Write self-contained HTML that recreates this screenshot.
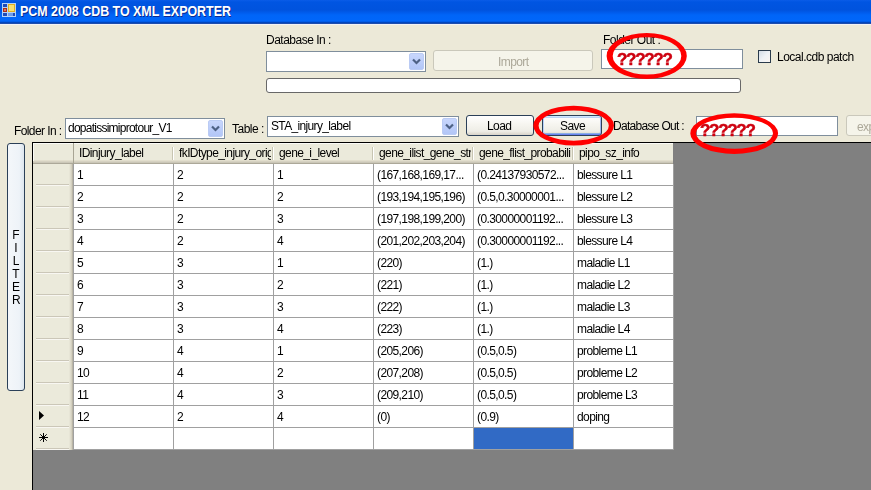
<!DOCTYPE html>
<html><head><meta charset="utf-8"><style>
*{box-sizing:border-box;margin:0;padding:0}
html,body{width:871px;height:490px;overflow:hidden;background:#ECE9D8;font-family:"Liberation Sans",sans-serif;font-size:12px;color:#000}
.a{position:absolute}
.t{position:absolute;white-space:nowrap;line-height:14px;letter-spacing:-0.6px;will-change:transform}
#title{left:0;top:0;width:871px;height:25px;background:linear-gradient(#0A5CE8 0px,#0055E2 2px,#0053DE 10px,#005DEE 13px,#0065F8 15px,#0066FA 21px,#0052D8 22px,#0038A4 23px,#3A62B8 24px,#F2F2F6 24px)}
.combo{position:absolute;background:#fff;border:1px solid #7F8E9C}
.ddb{position:absolute;right:1px;top:1px;width:15px;bottom:1px;background:linear-gradient(#C8D6FC,#B2C6F7);border:1px solid #BACBF4;border-radius:2px}
.ddb svg{position:absolute;left:2px;top:4px}
.btn{position:absolute;border:1px solid #2B4058;border-radius:3px;background:linear-gradient(#FFFFFF 0%,#F7F6F1 40%,#EEEDE6 80%,#D8D3C8 100%)}
.btnd{position:absolute;border:1px solid #CAC8BB;border-radius:3px;background:#F5F4EA}
.tb{position:absolute;background:#fff;border:1px solid #7F8E9C}
.hd{background:linear-gradient(#EBEADB 0px,#EBEADB 17px,#E2DECD 17px,#E2DECD 18px,#D6D2C2 18px,#D6D2C2 19px,#CBC7B8 19px,#CBC7B8 20px,#ACA899 20px)}
.hsep{position:absolute;width:2px;height:13px;border-left:1px solid #C7C5B2;border-right:1px solid #fff}
.rh{background:#EBEADB}
.rsep{position:absolute;width:33px;height:2px;border-top:1px solid #CBC7B8;border-bottom:1px solid #F8F7F2}
.gl{background:#A0A0A0}
</style></head><body>
<div id="title" class="a"></div>
<svg class="a" style="left:0;top:0" width="20" height="20" viewBox="0 0 20 20">
<rect x="2.5" y="3.5" width="13" height="13" fill="#2A62D8" stroke="#B4D2F6" stroke-width="1"/>
<path d="M7.5 3.5 V16.5 M2.5 7.5 H7.5 M2.5 12.5 H15.5" stroke="#B4D2F6" stroke-width="1"/>
<rect x="3" y="4" width="4" height="3" fill="#1D4AB8"/>
<rect x="3" y="8" width="4" height="4" fill="#A83018"/>
<rect x="4" y="9" width="2" height="2" fill="#E07060"/>
<rect x="3" y="13" width="4" height="3" fill="#1D4AB8"/>
<rect x="8" y="4" width="7" height="8" fill="#E0B020"/>
<rect x="9" y="5" width="5" height="6" fill="#F8E070"/>
<rect x="8" y="13" width="5" height="3" fill="#6C9CEC"/>
<rect x="13" y="13" width="2" height="3" fill="#1D4AB8"/>
</svg>
<div class="a" id="ttxt" style="left:20px;top:3px;font-weight:bold;font-size:14px;line-height:16px;color:#fff;text-shadow:1px 1px 0 #0A2A90;white-space:nowrap;transform:scaleX(0.888);transform-origin:0 0">PCM 2008 CDB TO XML EXPORTER</div>
<div class="t" style="left:266px;top:33px;letter-spacing:-0.5px">Database In :</div>
<div class="combo" style="left:266px;top:51px;width:160px;height:21px"><div class="ddb"><svg width="9" height="7" viewBox="0 0 9 7"><path d="M1 1.5 L4.5 5 L8 1.5" fill="none" stroke="#4D6185" stroke-width="2.2"/></svg></div></div>
<div class="btnd" style="left:433px;top:50px;width:160px;height:21px"></div>
<div class="t" style="left:498px;top:55px;color:#ACA899">Import</div>
<div class="a" style="left:266px;top:78px;width:475px;height:15px;border:1px solid #686868;border-radius:3px;background:#fff"></div>
<div class="t" style="left:603px;top:33px;letter-spacing:-0.5px">Folder Out :</div>
<div class="tb" style="left:601px;top:49px;width:142px;height:20px"></div>
<div class="a" style="left:758px;top:50px;width:13px;height:13px;border:1px solid #2A3B4C;background:linear-gradient(135deg,#D3DCE6,#EEF2F6 50%,#FBF6F2)"></div>
<div class="t" style="left:777px;top:50px;letter-spacing:-0.5px">Local.cdb patch</div>
<div class="t" style="left:14px;top:124px">Folder In :</div>
<div class="combo" style="left:65px;top:118px;width:160px;height:21px"><div class="ddb"><svg width="9" height="7" viewBox="0 0 9 7"><path d="M1 1.5 L4.5 5 L8 1.5" fill="none" stroke="#4D6185" stroke-width="2.2"/></svg></div></div>
<div class="t" style="left:68px;top:121px;letter-spacing:-0.75px">dopatissimiprotour_V1</div>
<div class="t" style="left:232px;top:122px;letter-spacing:-0.5px">Table :</div>
<div class="combo" style="left:267px;top:116px;width:192px;height:21px"><div class="ddb"><svg width="9" height="7" viewBox="0 0 9 7"><path d="M1 1.5 L4.5 5 L8 1.5" fill="none" stroke="#4D6185" stroke-width="2.2"/></svg></div></div>
<div class="t" style="left:271px;top:119px;letter-spacing:-0.65px">STA_injury_label</div>
<div class="btn" style="left:466px;top:115px;width:68px;height:21px"></div>
<div class="t" style="left:487px;top:119px">Load</div>
<div class="btn" style="left:542px;top:115px;width:60px;height:21px;box-shadow:inset 0 1px 0 #CEE7FF,inset 0 -1px 0 #6982EE,inset 1px 0 0 #B8D2F8,inset -1px 0 0 #A0B8F0,inset 0 2px 0 #BCD4F6,inset 0 -2px 0 #89ADE4"></div>
<div class="t" style="left:560px;top:119px">Save</div>
<div class="t" style="left:613px;top:119px;letter-spacing:-0.7px">Database Out :</div>
<div class="tb" style="left:696px;top:116px;width:142px;height:20px"></div>
<div class="btnd" style="left:846px;top:115px;width:60px;height:21px"></div>
<div class="t" style="left:857px;top:120px;color:#ACA899">export</div>
<div class="btn" style="left:7px;top:143px;width:18px;height:248px;background:linear-gradient(90deg,#F4F7FA,#EEF3F8 70%,#DDE6EE)"></div>
<div class="t" style="left:12px;top:228px;width:8px;text-align:center;letter-spacing:0">F</div>
<div class="t" style="left:12px;top:241px;width:8px;text-align:center;letter-spacing:0">I</div>
<div class="t" style="left:12px;top:254px;width:8px;text-align:center;letter-spacing:0">L</div>
<div class="t" style="left:12px;top:267px;width:8px;text-align:center;letter-spacing:0">T</div>
<div class="t" style="left:12px;top:280px;width:8px;text-align:center;letter-spacing:0">E</div>
<div class="t" style="left:12px;top:293px;width:8px;text-align:center;letter-spacing:0">R</div>
<div class="a" style="left:32px;top:142px;width:860px;height:360px;background:#808080;border-left:1px solid #000;border-top:1px solid #000"></div>
<div class="a hd" style="left:33px;top:143px;width:640px;height:21px"></div>
<div class="a" style="left:33px;top:143px;width:640px;height:1px;background:#FAFAF6"></div>
<div class="a" style="left:33px;top:143px;width:1px;height:18px;background:#FAFAF6"></div>
<div class="a" style="left:73px;top:143px;width:1px;height:21px;background:#A8A594"></div>
<div class="t" style="left:79px;top:146px;width:92px;overflow:hidden">IDinjury_label</div>
<div class="hsep" style="left:172px;top:147px"></div>
<div class="t" style="left:179px;top:146px;width:92px;overflow:hidden">fkIDtype_injury_orig</div>
<div class="hsep" style="left:272px;top:147px"></div>
<div class="t" style="left:279px;top:146px;width:92px;overflow:hidden">gene_i_level</div>
<div class="hsep" style="left:372px;top:147px"></div>
<div class="t" style="left:379px;top:146px;width:92px;overflow:hidden">gene_ilist_gene_str</div>
<div class="hsep" style="left:472px;top:147px"></div>
<div class="t" style="left:479px;top:146px;width:92px;overflow:hidden">gene_flist_probabili</div>
<div class="hsep" style="left:572px;top:147px"></div>
<div class="t" style="left:579px;top:146px;width:93px;overflow:hidden">pipo_sz_info</div>
<div class="a" style="left:73px;top:164px;width:600px;height:286px;background:#fff"></div>
<div class="a rh" style="left:33px;top:164px;width:40px;height:286px"></div>
<div class="a" style="left:69px;top:164px;width:4px;height:286px;background:linear-gradient(90deg,#EBEADB,#D6D2C2 60%,#ACA899)"></div>
<div class="rsep" style="left:36px;top:184px"></div>
<div class="rsep" style="left:36px;top:206px"></div>
<div class="rsep" style="left:36px;top:228px"></div>
<div class="rsep" style="left:36px;top:250px"></div>
<div class="rsep" style="left:36px;top:272px"></div>
<div class="rsep" style="left:36px;top:294px"></div>
<div class="rsep" style="left:36px;top:316px"></div>
<div class="rsep" style="left:36px;top:338px"></div>
<div class="rsep" style="left:36px;top:360px"></div>
<div class="rsep" style="left:36px;top:382px"></div>
<div class="rsep" style="left:36px;top:404px"></div>
<div class="rsep" style="left:36px;top:426px"></div>
<div class="rsep" style="left:36px;top:448px"></div>
<div class="a gl" style="left:73px;top:185px;width:600px;height:1px"></div>
<div class="a gl" style="left:73px;top:207px;width:600px;height:1px"></div>
<div class="a gl" style="left:73px;top:229px;width:600px;height:1px"></div>
<div class="a gl" style="left:73px;top:251px;width:600px;height:1px"></div>
<div class="a gl" style="left:73px;top:273px;width:600px;height:1px"></div>
<div class="a gl" style="left:73px;top:295px;width:600px;height:1px"></div>
<div class="a gl" style="left:73px;top:317px;width:600px;height:1px"></div>
<div class="a gl" style="left:73px;top:339px;width:600px;height:1px"></div>
<div class="a gl" style="left:73px;top:361px;width:600px;height:1px"></div>
<div class="a gl" style="left:73px;top:383px;width:600px;height:1px"></div>
<div class="a gl" style="left:73px;top:405px;width:600px;height:1px"></div>
<div class="a gl" style="left:73px;top:427px;width:600px;height:1px"></div>
<div class="a gl" style="left:73px;top:449px;width:600px;height:1px"></div>
<div class="a gl" style="left:73px;top:164px;width:1px;height:286px"></div>
<div class="a gl" style="left:173px;top:164px;width:1px;height:286px"></div>
<div class="a gl" style="left:273px;top:164px;width:1px;height:286px"></div>
<div class="a gl" style="left:373px;top:164px;width:1px;height:286px"></div>
<div class="a gl" style="left:473px;top:164px;width:1px;height:286px"></div>
<div class="a gl" style="left:573px;top:164px;width:1px;height:286px"></div>
<div class="a gl" style="left:673px;top:164px;width:1px;height:286px"></div>
<div class="t" style="left:77px;top:168px">1</div>
<div class="t" style="left:177px;top:168px">2</div>
<div class="t" style="left:277px;top:168px">1</div>
<div class="t" style="left:377px;top:168px">(167,168,169,17...</div>
<div class="t" style="left:477px;top:168px">(0.24137930572...</div>
<div class="t" style="left:577px;top:168px">blessure L1</div>
<div class="t" style="left:77px;top:190px">2</div>
<div class="t" style="left:177px;top:190px">2</div>
<div class="t" style="left:277px;top:190px">2</div>
<div class="t" style="left:377px;top:190px">(193,194,195,196)</div>
<div class="t" style="left:477px;top:190px">(0.5,0.30000001...</div>
<div class="t" style="left:577px;top:190px">blessure L2</div>
<div class="t" style="left:77px;top:212px">3</div>
<div class="t" style="left:177px;top:212px">2</div>
<div class="t" style="left:277px;top:212px">3</div>
<div class="t" style="left:377px;top:212px">(197,198,199,200)</div>
<div class="t" style="left:477px;top:212px">(0.30000001192...</div>
<div class="t" style="left:577px;top:212px">blessure L3</div>
<div class="t" style="left:77px;top:234px">4</div>
<div class="t" style="left:177px;top:234px">2</div>
<div class="t" style="left:277px;top:234px">4</div>
<div class="t" style="left:377px;top:234px">(201,202,203,204)</div>
<div class="t" style="left:477px;top:234px">(0.30000001192...</div>
<div class="t" style="left:577px;top:234px">blessure L4</div>
<div class="t" style="left:77px;top:256px">5</div>
<div class="t" style="left:177px;top:256px">3</div>
<div class="t" style="left:277px;top:256px">1</div>
<div class="t" style="left:377px;top:256px">(220)</div>
<div class="t" style="left:477px;top:256px">(1.)</div>
<div class="t" style="left:577px;top:256px">maladie L1</div>
<div class="t" style="left:77px;top:278px">6</div>
<div class="t" style="left:177px;top:278px">3</div>
<div class="t" style="left:277px;top:278px">2</div>
<div class="t" style="left:377px;top:278px">(221)</div>
<div class="t" style="left:477px;top:278px">(1.)</div>
<div class="t" style="left:577px;top:278px">maladie L2</div>
<div class="t" style="left:77px;top:300px">7</div>
<div class="t" style="left:177px;top:300px">3</div>
<div class="t" style="left:277px;top:300px">3</div>
<div class="t" style="left:377px;top:300px">(222)</div>
<div class="t" style="left:477px;top:300px">(1.)</div>
<div class="t" style="left:577px;top:300px">maladie L3</div>
<div class="t" style="left:77px;top:322px">8</div>
<div class="t" style="left:177px;top:322px">3</div>
<div class="t" style="left:277px;top:322px">4</div>
<div class="t" style="left:377px;top:322px">(223)</div>
<div class="t" style="left:477px;top:322px">(1.)</div>
<div class="t" style="left:577px;top:322px">maladie L4</div>
<div class="t" style="left:77px;top:344px">9</div>
<div class="t" style="left:177px;top:344px">4</div>
<div class="t" style="left:277px;top:344px">1</div>
<div class="t" style="left:377px;top:344px">(205,206)</div>
<div class="t" style="left:477px;top:344px">(0.5,0.5)</div>
<div class="t" style="left:577px;top:344px">probleme L1</div>
<div class="t" style="left:77px;top:366px">10</div>
<div class="t" style="left:177px;top:366px">4</div>
<div class="t" style="left:277px;top:366px">2</div>
<div class="t" style="left:377px;top:366px">(207,208)</div>
<div class="t" style="left:477px;top:366px">(0.5,0.5)</div>
<div class="t" style="left:577px;top:366px">probleme L2</div>
<div class="t" style="left:77px;top:388px">11</div>
<div class="t" style="left:177px;top:388px">4</div>
<div class="t" style="left:277px;top:388px">3</div>
<div class="t" style="left:377px;top:388px">(209,210)</div>
<div class="t" style="left:477px;top:388px">(0.5,0.5)</div>
<div class="t" style="left:577px;top:388px">probleme L3</div>
<div class="t" style="left:77px;top:410px">12</div>
<div class="t" style="left:177px;top:410px">2</div>
<div class="t" style="left:277px;top:410px">4</div>
<div class="t" style="left:377px;top:410px">(0)</div>
<div class="t" style="left:477px;top:410px">(0.9)</div>
<div class="t" style="left:577px;top:410px">doping</div>
<div class="a" style="left:474px;top:428px;width:99px;height:21px;background:#316AC5"></div>
<svg class="a" style="left:39px;top:411px" width="6" height="9" viewBox="0 0 6 9"><path d="M0 0 L5 4.5 L0 9 Z" fill="#000"/></svg>
<svg class="a" style="left:39px;top:433px" width="9" height="9" viewBox="0 0 9 9"><path d="M4.5 0 V9 M0 4.5 H9 M1.3 1.3 L7.7 7.7 M1.3 7.7 L7.7 1.3" stroke="#000" stroke-width="1"/></svg>
<svg class="a" style="left:0;top:0" width="871" height="490"><path fill="#F00" fill-rule="evenodd" d="M606.6 55.95 A40.1 22.95 0 1 0 686.8000000000001 55.95 A40.1 22.95 0 1 0 606.6 55.95 Z M612.7 55.9 A34.3 18.7 0 1 0 681.3 55.9 A34.3 18.7 0 1 0 612.7 55.9 Z M533.3 125.6 A40.35 19.8 0 1 0 614.0 125.6 A40.35 19.8 0 1 0 533.3 125.6 Z M538.6 125.65 A35.1 15.05 0 1 0 608.8000000000001 125.65 A35.1 15.05 0 1 0 538.6 125.65 Z M690.3000000000001 133.55 A43.9 20.35 0 1 0 778.1 133.55 A43.9 20.35 0 1 0 690.3000000000001 133.55 Z M696.0 133.3 A38.5 15.5 0 1 0 773.0 133.3 A38.5 15.5 0 1 0 696.0 133.3 Z"/></svg>
<div class="a" style="left:617px;top:51px;font-weight:bold;font-size:17px;line-height:18px;color:#D00010;letter-spacing:-1.3px;-webkit-text-stroke:0.5px #C8000E;white-space:nowrap">??????</div>
<div class="a" style="left:700px;top:122px;font-weight:bold;font-size:17px;line-height:18px;color:#D00010;letter-spacing:-1.3px;-webkit-text-stroke:0.5px #C8000E;white-space:nowrap">??????</div>
</body></html>
